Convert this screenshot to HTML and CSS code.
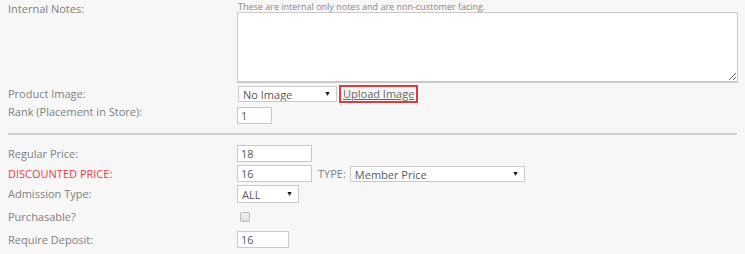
FILE: index.html
```html
<!DOCTYPE html>
<html lang="en">
<head>
  <meta charset="UTF-8" />
  <title>Product Settings</title>
  <link rel="stylesheet" href="styles.css">
</head>
<body>
  <form class="product-form">
    <div class="row row-notes">
      <label>Internal Notes:</label>
      <div class="field">
        <div class="hint">These are internal only notes and are non-customer facing.</div>
        <textarea class="notes"></textarea>
      </div>
    </div>

    <div class="row row-image">
      <label>Product Image:</label>
      <div class="field">
        <span class="select-wrap w-image">
          <select><option>No Image</option></select>
          <span class="arrow">&#9660;</span>
        </span>
        <a href="#" class="upload-link">Upload Image</a>
      </div>
    </div>

    <div class="row row-rank">
      <label>Rank (Placement in Store):</label>
      <div class="field">
        <input type="text" class="w-rank" value="1" />
      </div>
    </div>

    <hr />

    <div class="row row-price">
      <label>Regular Price:</label>
      <div class="field">
        <input type="text" class="w-price" value="18" />
      </div>
    </div>

    <div class="row row-price">
      <label class="alert">DISCOUNTED PRICE:</label>
      <div class="field">
        <input type="text" class="w-price" value="16" />
        <span class="type-label">TYPE:</span>
        <span class="select-wrap w-type">
          <select><option>Member Price</option></select>
          <span class="arrow">&#9660;</span>
        </span>
      </div>
    </div>

    <div class="row row-admission">
      <label>Admission Type:</label>
      <div class="field">
        <span class="select-wrap w-admission">
          <select><option>ALL</option></select>
          <span class="arrow">&#9660;</span>
        </span>
      </div>
    </div>

    <div class="row row-check">
      <label>Purchasable?</label>
      <div class="field">
        <span class="checkbox"></span>
      </div>
    </div>

    <div class="row row-deposit">
      <label>Require Deposit:</label>
      <div class="field">
        <input type="text" class="w-deposit" value="16" />
      </div>
    </div>
  </form>
</body>
</html>
```

FILE: styles.css
```css
body {
  margin: 0;
  padding: 0;
  background: #f7f7f7;
  font-family: "Open Sans", sans-serif;
  font-size: 11px;
  color: #808080;
}
.product-form {
  padding: 0 8px;
}
.row {
  display: grid;
  grid-template-columns: 229px 1fr;
  align-items: center;
}
.row label {
  line-height: 16px;
}
.row .alert {
  color: #e8403f;
}
.field {
  display: flex;
  align-items: center;
}
.row-notes {
  align-items: start;
  padding-top: 1px;
}
.row-notes .field {
  display: block;
}
.hint {
  font-size: 9px;
  line-height: 11px;
  color: #888;
  margin-left: 1px;
}
.notes {
  display: block;
  box-sizing: border-box;
  width: 501px;
  height: 71px;
  margin: 0;
  border: 1px solid #c9c9c9;
  border-bottom-width: 2px;
  background: #fff;
}
.row-image {
  margin-top: 2px;
}
.row-rank {
  margin-top: 4px;
}
.row-rank label {
  align-self: start;
  margin-top: -3px;
}
input, select {
  box-sizing: border-box;
  font-family: "Open Sans", sans-serif;
  font-size: 11px;
  color: #5a5a5a;
  background: #fff;
  border: 1px solid #c9c9c9;
  margin: 0;
  border-radius: 0;
}
input {
  height: 17px;
  padding: 0 3px;
}
.w-rank { width: 35px; }
.w-price { width: 75px; }
.w-deposit { width: 52px; }
.select-wrap {
  position: relative;
  display: inline-block;
}
.select-wrap select {
  -webkit-appearance: none;
  appearance: none;
  width: 100%;
  height: 16px;
  padding: 0 4px;
  display: block;
}
.select-wrap .arrow {
  position: absolute;
  right: 6px;
  top: 4px;
  font-size: 7px;
  line-height: 8px;
  color: #111;
}
.w-image { width: 99px; margin-left: 1px; }
.w-type { width: 175px; }
.w-admission { width: 62px; }
.w-admission select { height: 18px; }
.w-admission .arrow { top: 5px; }
.upload-link {
  display: inline-block;
  margin-left: 2px;
  padding: 0 2px;
  border: 2px solid #e0393e;
  color: #666;
  line-height: 14px;
}
hr {
  border: 0;
  height: 2px;
  background: #d0d0d0;
  margin: 9px 0 10px;
}
.row-price + .row-price {
  margin-top: 3px;
}
.type-label {
  margin: 0 4px 0 6px;
}
.row-admission {
  margin-top: 3px;
}
.row-check {
  margin-top: 6px;
}
.checkbox {
  display: block;
  width: 8px;
  height: 8px;
  margin-left: 3px;
  border: 1px solid #bbb;
  border-radius: 2px;
  background: linear-gradient(#f2f2f2, #ddd);
}
.row-deposit {
  margin-top: 6px;
}
```
